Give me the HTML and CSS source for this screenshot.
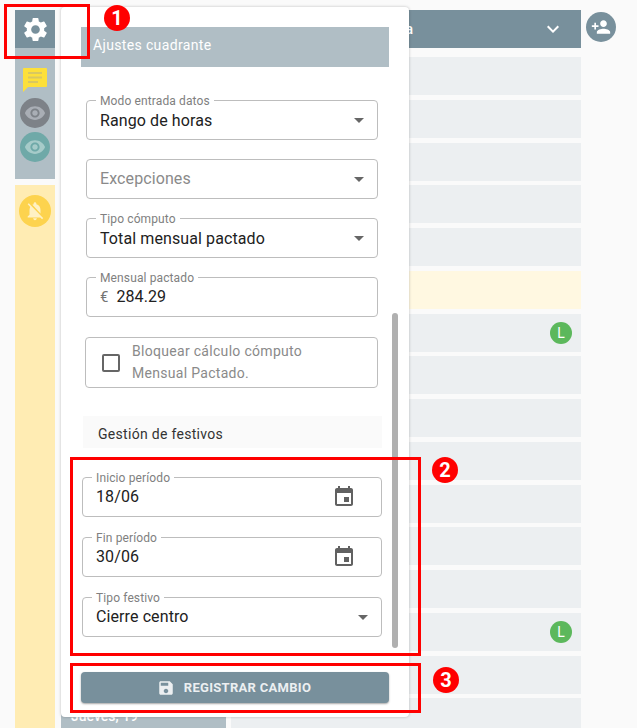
FILE: index.html
```html
<!DOCTYPE html>
<html lang="es">
<head>
  <title>Ajustes cuadrante</title>
  <meta charset="utf-8">
  <link rel="stylesheet" href="styles.css">
</head>
<body>
  <div class="page">
    <div class="sidebar">
      <div class="gear-box">
        <svg class="gear" viewBox="0 0 24 24"><path d="M19.14 12.94c.04-.3.06-.61.06-.94 0-.32-.02-.64-.07-.94l2.03-1.58a.49.49 0 0 0 .12-.61l-1.92-3.32a.488.488 0 0 0-.59-.22l-2.39.96c-.5-.38-1.03-.7-1.62-.94l-.36-2.54a.484.484 0 0 0-.48-.41h-3.84c-.24 0-.43.17-.47.41l-.36 2.54c-.59.24-1.13.57-1.62.94l-2.39-.96c-.22-.08-.47 0-.59.22L2.74 8.87c-.12.21-.08.47.12.61l2.03 1.58c-.05.3-.09.63-.09.94s.02.64.07.94l-2.03 1.58a.49.49 0 0 0-.12.61l1.92 3.32c.12.22.37.29.59.22l2.39-.96c.5.38 1.03.7 1.62.94l.36 2.54c.05.24.24.41.48.41h3.84c.24 0 .44-.17.47-.41l.36-2.54c.59-.24 1.13-.56 1.62-.94l2.39.96c.22.08.47 0 .59-.22l1.92-3.32c.12-.22.07-.47-.12-.61l-2.01-1.58zM12 15.6c-1.98 0-3.6-1.62-3.6-3.6s1.62-3.6 3.6-3.6 3.6 1.62 3.6 3.6-1.62 3.6-3.6 3.6z"/></svg>
      </div>
      <div class="tools">
        <svg class="note" viewBox="0 0 24 24">
          <path d="M1 0h22a1 1 0 0 1 1 1v17a1 1 0 0 1-1 1H5l-5 5V1a1 1 0 0 1 1-1z"/>
          <path class="note-lines" d="M5 4h14v2H5zM5 8.5h14v2H5zM5 13h10v2H5z"/>
        </svg>
        <div class="eye-btn eye-grey">
          <svg viewBox="0 0 24 24"><path d="M12 4.5C7 4.5 2.73 7.61 1 12c1.73 4.39 6 7.5 11 7.5s9.27-3.11 11-7.5c-1.73-4.39-6-7.5-11-7.5zM12 17c-2.76 0-5-2.24-5-5s2.24-5 5-5 5 2.24 5 5-2.24 5-5 5zm0-8c-1.66 0-3 1.34-3 3s1.34 3 3 3 3-1.34 3-3-1.34-3-3-3z"/></svg>
        </div>
        <div class="eye-btn eye-teal">
          <svg viewBox="0 0 24 24"><path d="M12 4.5C7 4.5 2.73 7.61 1 12c1.73 4.39 6 7.5 11 7.5s9.27-3.11 11-7.5c-1.73-4.39-6-7.5-11-7.5zM12 17c-2.76 0-5-2.24-5-5s2.24-5 5-5 5 2.24 5 5-2.24 5-5 5zm0-8c-1.66 0-3 1.34-3 3s1.34 3 3 3 3-1.34 3-3-1.34-3-3-3z"/></svg>
        </div>
      </div>
      <div class="alerts">
        <div class="bell-btn">
          <svg viewBox="0 0 24 24"><path d="M20 18.69L7.84 6.14 5.27 3.49 4 4.76l2.8 2.8v.01c-.52.99-.8 2.16-.8 3.42v5l-2 2v1h13.73l2 2L21 19.72l-1-1.03zM12 22c1.11 0 2-.89 2-2h-4c0 1.11.89 2 2 2zm6-7.32V11c0-3.08-1.64-5.64-4.5-6.32V4c0-.83-.67-1.5-1.5-1.5s-1.5.67-1.5 1.5v.68c-.15.03-.29.08-.42.12-.1.03-.2.07-.3.11h-.01c-.2.08-.4.17-.59.27-.01 0-.01.01-.02.01L18 14.68z"/></svg>
        </div>
      </div>
    </div>

    <div class="grid">
      <div class="day-col">
        <div class="row"></div><div class="row"></div><div class="row"></div>
        <div class="row"></div><div class="row"></div><div class="row"></div>
        <div class="row"></div><div class="row"></div><div class="row"></div>
        <div class="row"></div><div class="row"></div><div class="row"></div>
        <div class="row"></div><div class="row"></div><div class="row"></div>
        <div class="day-row">Jueves, 19</div>
      </div>
      <div class="main-col">
        <div class="main-head">
          <span class="main-title">Semana</span>
          <svg viewBox="0 0 24 24"><path d="M7.41 8.59 12 13.17l4.59-4.58L18 10l-6 6-6-6z"/></svg>
        </div>
        <div class="rows">
          <div class="row"></div>
          <div class="row"></div>
          <div class="row"></div>
          <div class="row"></div>
          <div class="row"></div>
          <div class="row row-yellow"></div>
          <div class="row row-badge"><span class="badge-l">L</span></div>
          <div class="row"></div>
          <div class="row"></div>
          <div class="row"></div>
          <div class="row"></div>
          <div class="row"></div>
          <div class="row"></div>
          <div class="row row-badge"><span class="badge-l">L</span></div>
          <div class="row"></div>
          <div class="row"></div>
        </div>
      </div>
      <div class="add-col">
        <div class="add-btn">
          <svg viewBox="0 0 24 24"><path d="M15 12c2.21 0 4-1.79 4-4s-1.79-4-4-4-4 1.79-4 4 1.79 4 4 4zm-9-2V7H4v3H1v2h3v3h2v-3h3v-2H6zm9 4c-2.67 0-8 1.34-8 4v2h16v-2c0-2.66-5.33-4-8-4z"/></svg>
        </div>
      </div>
    </div>
  </div>

  <div class="panel">
    <div class="panel-title">Ajustes cuadrante</div>

    <div class="form">
      <div class="field field-low">
        <span class="field-label">Modo entrada datos</span>
        <span class="field-value">Rango de horas</span>
        <span class="caret"></span>
      </div>
      <div class="field">
        <span class="field-value field-empty">Excepciones</span>
        <span class="caret"></span>
      </div>
      <div class="field field-low">
        <span class="field-label">Tipo cómputo</span>
        <span class="field-value">Total mensual pactado</span>
        <span class="caret"></span>
      </div>
      <div class="field">
        <span class="field-label">Mensual pactado</span>
        <span class="euro">€</span>
        <span class="field-value">284.29</span>
      </div>
      <div class="check-box">
        <span class="check"></span>
        <span class="check-text">Bloquear cálculo cómputo Mensual Pactado.</span>
      </div>
    </div>

    <div class="section-title">Gestión de festivos</div>

    <div class="form form-wide">
      <div class="field">
        <span class="field-label">Inicio período</span>
        <span class="field-value">18/06</span>
        <svg class="cal" viewBox="0 0 24 24"><path d="M17 12h-5v5h5v-5zM16 1v2H8V1H6v2H5c-1.11 0-1.99.9-1.99 2L3 19c0 1.1.89 2 2 2h14c1.1 0 2-.9 2-2V5c0-1.1-.9-2-2-2h-1V1h-2zm3 18H5V8h14v11z"/></svg>
      </div>
      <div class="field">
        <span class="field-label">Fin período</span>
        <span class="field-value">30/06</span>
        <svg class="cal" viewBox="0 0 24 24"><path d="M17 12h-5v5h5v-5zM16 1v2H8V1H6v2H5c-1.11 0-1.99.9-1.99 2L3 19c0 1.1.89 2 2 2h14c1.1 0 2-.9 2-2V5c0-1.1-.9-2-2-2h-1V1h-2zm3 18H5V8h14v11z"/></svg>
      </div>
      <div class="field">
        <span class="field-label">Tipo festivo</span>
        <span class="field-value">Cierre centro</span>
        <span class="caret"></span>
      </div>
    </div>

    <div class="scroll-thumb"></div>

    <button class="save-btn">
      <svg viewBox="0 0 24 24"><path d="M17 3H5c-1.11 0-2 .9-2 2v14c0 1.1.89 2 2 2h14c1.1 0 2-.9 2-2V7l-4-4zm-5 16c-1.66 0-3-1.34-3-3s1.34-3 3-3 3 1.34 3 3-1.34 3-3 3zm3-10H5V5h10v4z"/></svg>
      Registrar cambio
    </button>
  </div>

  <div class="mark mark-1"></div>
  <div class="mark mark-2"></div>
  <div class="mark mark-3"></div>
  <div class="num num-1">1</div>
  <div class="num num-2">2</div>
  <div class="num num-3">3</div>
</body>
</html>
```

FILE: styles.css
```css
html, body {
  margin: 0;
  padding: 0;
  height: 100%;
}
body {
  position: relative;
  width: 637px;
  height: 728px;
  overflow: hidden;
  background: #fafafa;
  color: #212121;
  font-family: Roboto, sans-serif;
}
svg {
  display: block;
  fill: currentColor;
}

/* page behind the panel */
.page {
  display: flex;
  height: 100%;
  padding: 10px 0 0 15px;
  box-sizing: border-box;
}
.sidebar {
  width: 40px;
  flex: none;
  display: flex;
  flex-direction: column;
}
.gear-box {
  height: 38px;
  background: #78909c;
  color: #fff;
  display: flex;
  align-items: center;
  justify-content: center;
}
.gear {
  width: 29px;
  height: 29px;
}
.tools {
  height: 131px;
  background: #b0bec5;
  display: flex;
  flex-direction: column;
  align-items: center;
}
.note {
  width: 24px;
  height: 24px;
  flex: none;
  margin-top: 20px;
  color: #fde03a;
}
.note-lines {
  fill: #d9c860;
}
.eye-btn {
  width: 30px;
  height: 30px;
  border-radius: 50%;
  display: flex;
  align-items: center;
  justify-content: center;
  flex: none;
}
.eye-btn svg {
  width: 22px;
  height: 22px;
}
.eye-grey {
  margin-top: 6px;
  background: #7d8288;
  color: #a9aeb5;
}
.eye-teal {
  margin-top: 4px;
  background: #6fa9a8;
  color: #a6cbc9;
}
.alerts {
  flex: 1;
  margin-top: 6px;
  background: #ffecb3;
  display: flex;
  justify-content: center;
  align-items: flex-start;
}
.bell-btn {
  width: 32px;
  height: 32px;
  margin-top: 10px;
  border-radius: 50%;
  background: #fdd34e;
  color: #fff1c4;
  display: flex;
  align-items: center;
  justify-content: center;
}
.bell-btn svg {
  width: 22px;
  height: 22px;
}

.grid {
  flex: 1;
  display: flex;
}
.day-col {
  width: 165px;
  margin-left: 6px;
  flex: none;
  display: flex;
  flex-direction: column;
  gap: 4.75px;
  padding-top: 47px;
}
.day-col .row {
  background: #eceff1;
}
.day-row {
  height: 38px;
  flex: none;
  background: #b0bec5;
  color: #fff;
  font-size: 14px;
  font-weight: 500;
  padding: 10px 10px 0;
  box-sizing: border-box;
}
.main-col {
  width: 350px;
  margin-left: 5px;
  flex: none;
}
.main-head {
  height: 38px;
  background: #78909c;
  color: #fff;
  display: flex;
  align-items: center;
  padding-right: 16px;
}
.main-title {
  width: 182px;
  margin-right: auto;
  font-size: 14px;
  font-weight: 500;
  text-align: right;
}
.main-head svg {
  width: 24px;
  height: 24px;
}
.rows {
  display: flex;
  flex-direction: column;
  gap: 4.75px;
  padding-top: 9px;
}
.row {
  height: 38px;
  flex: none;
  background: #eceff1;
}
.row-yellow {
  background: #fff8e1;
}
.row-badge {
  display: flex;
  justify-content: flex-end;
  align-items: center;
  padding-right: 9px;
}
.badge-l {
  width: 22px;
  height: 22px;
  border-radius: 50%;
  background: #5cb85c;
  color: #fff;
  font-size: 14px;
  line-height: 22px;
  text-align: center;
}
.add-col {
  margin-left: 5px;
}
.add-btn {
  width: 30px;
  height: 30px;
  margin-top: 2px;
  border-radius: 50%;
  background: #78909c;
  color: #fff;
  display: flex;
  align-items: center;
  justify-content: center;
}
.add-btn svg {
  width: 20px;
  height: 20px;
}

/* floating panel */
.panel {
  position: absolute;
  left: 61px;
  top: 7px;
  width: 348px;
  height: 710px;
  box-sizing: border-box;
  padding-top: 20px;
  background: #fff;
  border-radius: 4px;
  box-shadow: 0 0 3px rgba(0, 0, 0, .25);
}
.panel-title {
  height: 40px;
  margin: 0 20px;
  padding-left: 12px;
  background: #b0bec5;
  color: #fff;
  font-size: 14px;
  line-height: 37px;
  letter-spacing: .35px;
}
.form {
  display: flex;
  flex-direction: column;
  gap: 19px;
  margin: 33px 31px 0 25px;
}
.form-wide {
  gap: 20px;
  margin: 29px 27px 0 21px;
}
.field {
  position: relative;
  height: 40px;
  box-sizing: border-box;
  border: 1px solid #bdbdbd;
  border-radius: 4px;
  padding: 0 13px;
  display: flex;
  align-items: center;
}
.field-low {
  padding-top: 2px;
}
.field-label {
  position: absolute;
  left: 9px;
  top: -7px;
  padding: 0 4px;
  background: #fff;
  color: #808080;
  font-size: 12px;
  line-height: 14px;
  letter-spacing: .12px;
}
.field-value {
  font-size: 16px;
  line-height: 20px;
  letter-spacing: .1px;
  color: #212121;
}
.field-empty {
  color: #8a8a8a;
}
.caret {
  position: absolute;
  right: 13px;
  top: 17px;
  width: 0;
  height: 0;
  border-left: 5px solid transparent;
  border-right: 5px solid transparent;
  border-top: 5px solid #666;
}
.euro {
  margin-right: 8px;
  font-size: 15px;
  color: #757575;
}
.cal {
  position: absolute;
  right: 25px;
  top: 7px;
  width: 24px;
  height: 24px;
  color: #616161;
}
.check-box {
  height: 51px;
  box-sizing: border-box;
  border: 1px solid #bdbdbd;
  border-radius: 4px;
  display: flex;
  align-items: center;
  padding: 0 12px 0 16px;
  margin: 1px 0 0 -1px;
}
.check {
  width: 14px;
  height: 14px;
  flex: none;
  border: 2px solid #666;
  border-radius: 2px;
  margin-right: 12px;
}
.check-text {
  width: 210px;
  margin-top: -2px;
  font-size: 14px;
  line-height: 22px;
  letter-spacing: .3px;
  color: #8a8a8a;
}
.section-title {
  height: 32px;
  margin: 28px 27px 0 22px;
  padding-left: 15px;
  background: #fafafa;
  color: #333;
  font-size: 14px;
  line-height: 36px;
  letter-spacing: .3px;
}
.scroll-thumb {
  position: absolute;
  left: 331px;
  top: 306px;
  width: 6px;
  height: 335px;
  border-radius: 3px;
  background: #b0b0b0;
}
.save-btn {
  position: absolute;
  left: 20px;
  top: 665px;
  width: 308px;
  height: 31px;
  padding: 0 2px 0 0;
  border: 0;
  border-radius: 4px;
  background: #78909c;
  color: #eceff1;
  box-shadow: 0 1px 2px rgba(0, 0, 0, .35);
  font: 700 13px Roboto, sans-serif;
  letter-spacing: .3px;
  text-transform: uppercase;
  display: flex;
  align-items: center;
  justify-content: center;
  gap: 9px;
}
.save-btn svg {
  width: 18px;
  height: 18px;
}

/* red annotations on top of the capture */
.mark {
  position: absolute;
  box-sizing: border-box;
  border: 3px solid #f00;
}
.mark-1 {
  left: 4px;
  top: 4px;
  width: 86px;
  height: 55px;
}
.mark-2 {
  left: 70px;
  top: 457px;
  width: 351px;
  height: 199px;
}
.mark-3 {
  left: 70px;
  top: 663px;
  width: 351px;
  height: 50px;
}
.num {
  position: absolute;
  width: 26px;
  height: 26px;
  border-radius: 50%;
  background: #f00;
  color: #fff;
  font: 700 20px/26px Roboto, sans-serif;
  text-align: center;
}
.num-1 {
  left: 104px;
  top: 5px;
}
.num-2 {
  left: 432px;
  top: 457px;
}
.num-3 {
  left: 433px;
  top: 667px;
}
```
